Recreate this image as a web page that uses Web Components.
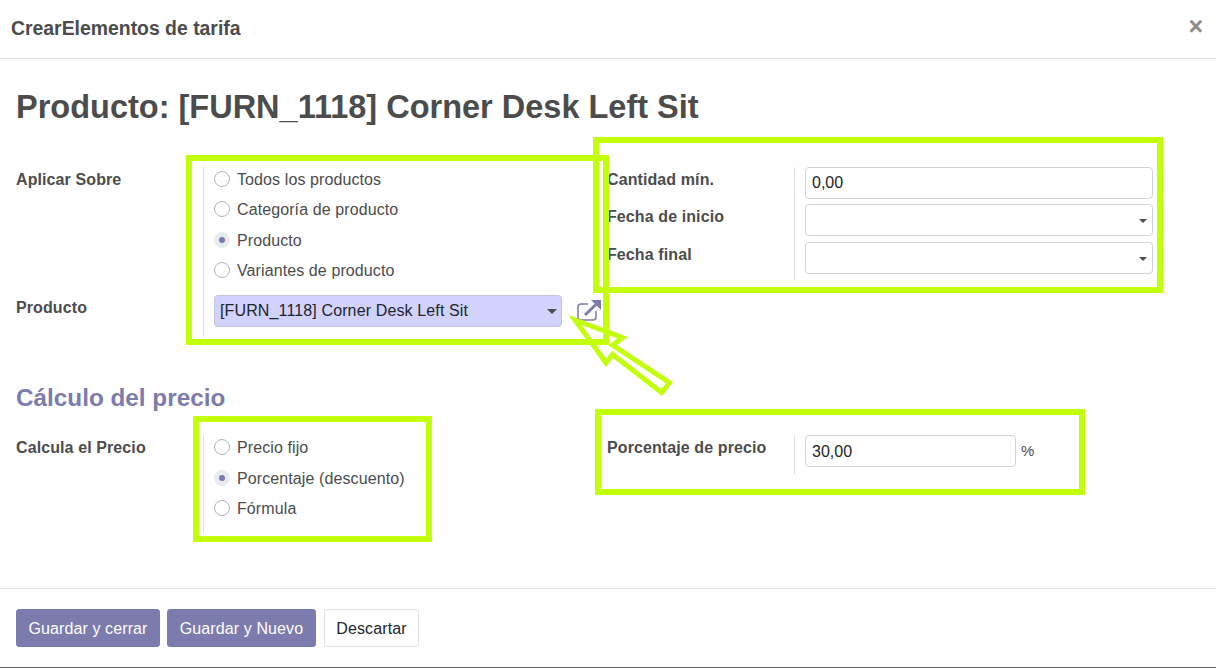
<!DOCTYPE html>
<html lang="es"><head><meta charset="utf-8"><title>Elementos de tarifa</title>
<style>
html,body{margin:0;padding:0;background:#fff}
body{font-family:"Liberation Sans",Arial,sans-serif;color:#4c4c4c;width:1216px;height:668px;overflow:hidden;position:relative}
</style></head><body>
<tarifa-dialog>
  <span slot="title">CrearElementos de tarifa</span>
  <h1 slot="heading" style="margin:0;font-size:32.5px;line-height:38px;font-weight:700;color:#4c4c4c">Producto: [FURN_1118] Corner Desk Left Sit</h1>

  <form-pair slot="main">
    <form-row label="Aplicar Sobre" slot="left">
      <radio-group style="padding-bottom:14.2px">
        <radio-item>Todos los productos</radio-item>
        <radio-item>Categoría de producto</radio-item>
        <radio-item checked>Producto</radio-item>
        <radio-item>Variantes de producto</radio-item>
      </radio-group>
    </form-row>
    <form-row label="Producto" slot="left" style="--cell-h:42px">
      <product-picker>[FURN_1118] Corner Desk Left Sit</product-picker>
    </form-row>
    <form-row label="Cantidad mín." slot="right" style="--cell-h:37px"><text-box>0,00</text-box></form-row>
    <form-row label="Fecha de inicio" slot="right" style="--cell-h:38px"><text-box caret></text-box></form-row>
    <form-row label="Fecha final" slot="right" style="--cell-h:38px"><text-box caret></text-box></form-row>
  </form-pair>

  <section-title slot="main">Cálculo del precio</section-title>

  <form-pair slot="main">
    <form-row label="Calcula el Precio" slot="left" style="--cell-h:98px">
      <radio-group style="padding-top:1px">
        <radio-item>Precio fijo</radio-item>
        <radio-item checked>Porcentaje (descuento)</radio-item>
        <radio-item>Fórmula</radio-item>
      </radio-group>
    </form-row>
    <form-row label="Porcentaje de precio" slot="right" style="--cell-h:39px">
      <text-box unit="%" style="--box-w:211px;--txt-pt:2px">30,00</text-box>
    </form-row>
  </form-pair>

  <action-button slot="footer" primary style="--w:144px">Guardar y cerrar</action-button>
  <action-button slot="footer" primary style="--w:149px">Guardar y Nuevo</action-button>
  <action-button slot="footer" style="--w:95px">Descartar</action-button>
</tarifa-dialog>
<callout-marks></callout-marks>

<script>
const def=(name,css,html)=>{
  customElements.define(name,class extends HTMLElement{
    constructor(){super();this.attachShadow({mode:'open'})}
    connectedCallback(){
      this.shadowRoot.innerHTML=`<style>${css}</style>`+(typeof html==='function'?html(this):html);
    }
  });
};
def('tarifa-dialog',`
:host{display:flex;flex-direction:column;height:668px;box-sizing:border-box;border-bottom:1px solid #666}
header{height:59px;box-sizing:border-box;border-bottom:1px solid #dee2e6;display:flex;align-items:center;justify-content:space-between;padding:0 13px 2px 11px;font-size:19.4px;font-weight:700;color:#4c4c4c;flex:none}
header b{font-size:25px;color:#8c8c8c;font-weight:700;line-height:1;margin-top:-4px}
main{flex:1;padding:29px 16px 0;min-height:0}
.h{margin-bottom:41px}
footer{flex:none;height:79px;box-sizing:border-box;border-top:1px solid #dee2e6;padding:20px 16px 0;display:flex;gap:7px;align-items:flex-start}
::slotted(action-button:last-child){margin-left:1px}
`,`<header><slot name="title"></slot><b>×</b></header>
<main><div class="h"><slot name="heading"></slot></div><slot name="main"></slot></main>
<footer><slot name="footer"></slot></footer>`);
def('form-pair',`
:host{display:grid;grid-template-columns:591px 546px}
div{display:flex;flex-direction:column;align-items:stretch}
`,`<div><slot name="left"></slot></div><div><slot name="right"></slot></div>`);
def('form-row',`
:host{display:grid;grid-template-columns:187px 1fr;font-size:16px}
.l{font-weight:700;line-height:22px;padding-top:2px;color:#4c4c4c;letter-spacing:.1px;white-space:nowrap}
.v{border-left:1px solid #dee2e6;padding-left:10px;box-sizing:border-box;height:var(--cell-h,auto);min-width:0}
`,h=>`<div class="l">${h.getAttribute('label')}</div><div class="v"><slot></slot></div>`);
def('radio-group',`:host{display:flex;flex-direction:column;gap:8.5px;padding-bottom:13.5px}`,`<slot></slot>`);
def('radio-item',`
:host{display:flex;align-items:center;gap:7px;height:22px;font-size:16px;color:#4c4c4c;letter-spacing:.1px;white-space:nowrap;padding-top:1px;box-sizing:border-box}
i{width:16px;height:16px;border-radius:50%;box-sizing:border-box;border:1px solid #adb5bd;background:#fff;flex:none;display:flex;align-items:center;justify-content:center}
i.on{background:#e9ecef;border-color:#e9ecef}
i.on::after{content:"";width:6px;height:6px;border-radius:50%;background:#7c7bad}
span{padding-top:2px}
`,h=>`<i class="${h.hasAttribute('checked')?'on':''}"></i><span><slot></slot></span>`);
def('text-box',`
:host{display:flex;align-items:center;gap:5px;font-size:16px;color:#212529}
div{width:var(--box-w,348px);height:32px;box-sizing:border-box;border:1px solid #ced4da;border-radius:4px;padding:0 6px;display:flex;align-items:center;justify-content:space-between;line-height:30px}
span.t{padding-top:var(--txt-pt,0)}
.c{width:0;height:0;border:4px solid transparent;border-top-color:#4c4c4c;border-bottom:0;margin-right:-1px;margin-top:2px}
u{text-decoration:none;font-size:15px;color:#4c4c4c}
`,h=>`<div><span class="t"><slot></slot></span>${h.hasAttribute('caret')?'<span class="c"></span>':''}</div>${h.getAttribute('unit')?`<u>${h.getAttribute('unit')}</u>`:''}`);
def('product-picker',`
:host{display:flex;align-items:center;gap:14px;font-size:16px;letter-spacing:.13px;color:#212529}
div{width:348px;height:32px;box-sizing:border-box;border:1px solid #c4c4de;border-radius:4px;background:#d2d2ff;padding:1px 6px 0 5px;display:flex;align-items:center;justify-content:space-between;white-space:nowrap}
.c{width:0;height:0;border:5px solid transparent;border-top-color:#4c4c4c;border-bottom:0;margin-right:-2px}
svg{flex:none;margin-top:-2px}
`,`<div><span><slot></slot></span><span class="c"></span></div>
<svg width="26" height="24" viewBox="0 0 26 24" fill="none"><path d="M12 6H5a3 3 0 0 0-3 3v10a3 3 0 0 0 3 3h12a3 3 0 0 0 3-3v-6" stroke="#7c7bad" stroke-width="1.500"/><path d="M9 17 20 6.500" stroke="#7c7bad" stroke-width="3"/><path d="M15 2H25V12Z" fill="#7c7bad"/></svg>`);
def('section-title',`
:host{display:block;font-size:24.3px;line-height:28px;font-weight:700;color:#7c7bad;margin:47px 0 23px}
`,`<slot></slot>`);
def('action-button',`
:host{display:inline-flex;width:var(--w);height:38px;box-sizing:border-box;align-items:center;justify-content:center;border-radius:3px;font-size:16px;letter-spacing:.1px;padding-top:1px;border:1px solid #dee2e6;background:#fff;color:#212529;white-space:nowrap}
:host([primary]){background:#7c7bad;border-color:#7c7bad;color:#fff}
`,`<slot></slot>`);
def('callout-marks',`
:host{position:absolute;inset:0;pointer-events:none;display:block}
i{position:absolute;box-sizing:border-box;border:6px solid #c3ff0b}
svg{position:absolute;left:0;top:0}
`,`<i style="left:186px;top:155px;width:423px;height:190px"></i>
<i style="left:593px;top:137px;width:570px;height:156px"></i>
<i style="left:193px;top:416px;width:239px;height:126px"></i>
<i style="left:595px;top:409px;width:490px;height:86px"></i>
<svg width="1216" height="668"><path d="M575 320 622.700 337.700 612.600 345.100 669.500 382.600 661.600 392.500 612.500 354.500 606 362.800Z" fill="none" stroke="#c3ff0b" stroke-width="5" stroke-miterlimit="8"/></svg>`);
</script>
</body></html>
